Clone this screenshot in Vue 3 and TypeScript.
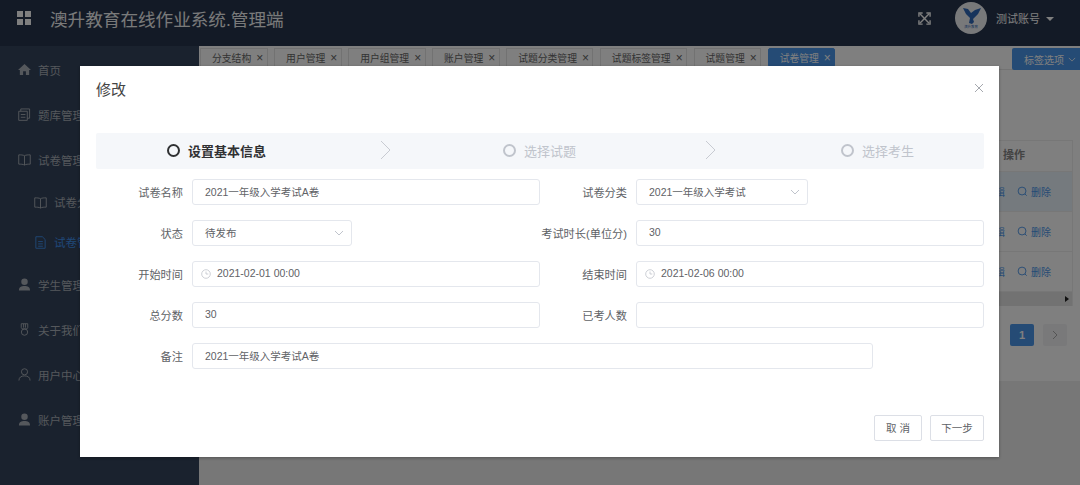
<script setup lang="ts">
interface Field {
  label: string
  value: string
  kind?: 'select' | 'date'
  width?: number
  wide?: boolean
}

const menu = [
  { name: '首页', icon: 'home' },
  { name: '题库管理', icon: 'copy' },
  { name: '试卷管理', icon: 'book' },
  { name: '试卷分类', icon: 'book', sub: true },
  { name: '试卷管理', icon: 'doc', sub: true, active: true },
  { name: '学生管理', icon: 'user' },
  { name: '关于我们', icon: 'medal' },
  { name: '用户中心', icon: 'person' },
  { name: '账户管理', icon: 'user' },
]

const tags = ['分支结构', '用户管理', '用户组管理', '账户管理', '试题分类管理', '试题标签管理', '试题管理', '试卷管理']

const fields: Field[] = [
  { label: '试卷名称', value: '2021一年级入学考试A卷' },
  { label: '试卷分类', value: '2021一年级入学考试', kind: 'select', width: 172 },
  { label: '状态', value: '待发布', kind: 'select', width: 160 },
  { label: '考试时长(单位分)', value: '30' },
  { label: '开始时间', value: '2021-02-01 00:00', kind: 'date' },
  { label: '结束时间', value: '2021-02-06 00:00', kind: 'date' },
  { label: '总分数', value: '30' },
  { label: '已考人数', value: '' },
  { label: '备注', value: '2021一年级入学考试A卷', wide: true, width: 681 },
]
</script>

<template>
  <div class="page">
    <header class="topbar">
      <svg class="grid-icon" viewBox="0 0 14 14"><path d="M0 0h6v6H0zM8 0h6v6H8zM0 8h6v6H0zM8 8h6v6H8z" /></svg>
      <h1 class="app-title">澳升教育在线作业系统.管理端</h1>
      <svg class="expand" viewBox="0 0 14 14">
        <path d="M2 2l10 10M12 2L2 12" />
        <path d="M1 5V1h4M9 1h4v4M13 9v4H9M5 13H1V9" />
      </svg>
      <svg class="avatar" viewBox="0 0 32 32">
        <circle cx="16" cy="16" r="16" fill="#f0f2f4" />
        <path d="M8 6l5 1 3 4 4-3 6-2-3 6-5 5 1 3-2 2-3-1 1-5-4-4z" fill="#2e68b8" />
        <text x="16" y="26" font-size="3.4" text-anchor="middle" fill="#2e68b8">澳升教育</text>
      </svg>
      <span class="account">测试账号</span>
      <i class="caret"></i>
    </header>
    <div class="body">
      <aside class="sidebar">
        <div
          v-for="item in menu"
          :key="item.name + item.icon"
          class="menu-item"
          :class="{ sub: item.sub, active: item.active }"
        >
          <svg class="menu-icon" viewBox="0 0 14 14">
            <path v-if="item.icon === 'home'" class="solid" d="M7 1L0 7.500h2V13h3.500V9h3v4H12V7.500h2z" />
            <path v-else-if="item.icon === 'copy'" d="M3 3.500V1h9.500v10H10M.8 3.500H10V13.300H.8zM3 7h5M3 10h5" />
            <path v-else-if="item.icon === 'book'" d="M7 3C5.500 2 3 2 .8 2v10c2.200 0 4.700 0 6.200 1 1.500-1 4-1 6.200-1V2C11 2 8.500 2 7 3zM7 3v10" />
            <path v-else-if="item.icon === 'doc'" d="M2 .8h7l3 3v9.400H2zM4.500 6h5M4.500 8.500h5M4.500 11h5" />
            <path v-else-if="item.icon === 'user'" class="solid" d="M7 .5a3.500 3.500 0 1 1 0 7 3.500 3.500 0 0 1 0-7zM1 13.500c0-4 2.500-5 6-5s6 1 6 5z" />
            <path v-else-if="item.icon === 'medal'" d="M3.500.8h7v4l-1 1.600h-5l-1-1.600zM6 1v4M8 1v4M7 6.400a3.400 3.400 0 1 1 0 6.800 3.400 3.400 0 0 1 0-6.800z" />
            <path v-else d="M7 .8a3.300 3.300 0 1 1 0 6.600A3.300 3.300 0 0 1 7 .800zM1 13.500c0-3.500 2.500-5 6-5s6 1.500 6 5" />
          </svg>
          <span>{{ item.name }}</span>
        </div>
      </aside>
      <main class="main">
        <div class="tagbar">
          <div v-for="(tag, i) in tags" :key="tag" class="tag" :class="{ current: i === tags.length - 1 }">
            {{ tag }}<span class="tag-x">×</span>
          </div>
          <button class="tag-menu">
            标签选项
            <svg viewBox="0 0 10 6"><path d="M1 1l4 4 4-4" /></svg>
          </button>
        </div>
        <section class="content">
          <div class="table">
            <div class="table-head"><span>操作</span></div>
            <div v-for="n in 3" :key="n" class="table-row" :class="{ hovered: n === 1 }">
              <span>编辑</span>
              <svg viewBox="0 0 12 12"><circle cx="5.500" cy="5.500" r="4.300" /><path d="M8.600 8.600l2 2" /></svg>
              <span>删除</span>
            </div>
            <div class="table-scroll"><i></i></div>
          </div>
          <div class="pager">
            <span class="page-no">1</span>
            <span class="page-next"><svg viewBox="0 0 6 10"><path d="M1 1l4 4-4 4" /></svg></span>
          </div>
        </section>
      </main>
    </div>

    <div class="overlay">
      <div class="dialog">
        <div class="dialog-head">
          <span class="dialog-title">修改</span>
          <svg class="close" viewBox="0 0 10 10"><path d="M1 1l8 8M9 1l-8 8" /></svg>
        </div>
        <div class="steps">
          <div class="step first"><i></i>设置基本信息</div>
          <svg class="step-arrow a1" viewBox="0 0 12 20"><path d="M1 1l9 9-9 9" /></svg>
          <div class="step"><i></i>选择试题</div>
          <svg class="step-arrow a2" viewBox="0 0 12 20"><path d="M1 1l9 9-9 9" /></svg>
          <div class="step"><i></i>选择考生</div>
        </div>
        <form class="form">
          <div v-for="f in fields" :key="f.label" class="field" :class="{ wide: f.wide }">
            <label>{{ f.label }}</label>
            <div class="input" :style="f.width ? { width: f.width + 'px', flex: 'none' } : undefined">
              <svg v-if="f.kind === 'date'" class="clock" viewBox="0 0 10 10">
                <circle cx="5" cy="5" r="4.300" /><path d="M5 2.500V5h2.300" />
              </svg>
              <span>{{ f.value }}</span>
              <svg v-if="f.kind === 'select'" class="chevron" viewBox="0 0 10 6"><path d="M1 1l4 4 4-4" /></svg>
            </div>
          </div>
        </form>
        <div class="dialog-foot">
          <button type="button" class="btn cancel">取 消</button>
          <button type="button" class="btn next">下一步</button>
        </div>
      </div>
    </div>
  </div>
</template>

<style>
html, body { margin: 0; overflow: hidden; }
</style>

<style scoped>
.page {
  position: relative;
  width: 1080px;
  height: 485px;
  overflow: hidden;
  display: flex;
  flex-direction: column;
  font-family: "Liberation Sans", "Noto Sans CJK SC", sans-serif;
  background: #eee;
}
.topbar {
  height: 46px;
  flex: none;
  padding-bottom: 10px;
  box-sizing: border-box;
  display: flex;
  align-items: center;
  background: #26344c;
  color: #fff;
}
.grid-icon { width: 14px; height: 14px; margin: 0 0 0 17px; fill: #fff; }
.app-title {
  margin: 0 0 0 19px;
  font-size: 17.600px;
  font-weight: 400;
  color: #fff;
  opacity: 0.95;
}
.expand {
  width: 13px;
  height: 13px;
  margin-left: auto;
  fill: none;
  stroke: #fff;
  stroke-width: 1.500;
}
.avatar { width: 32px; height: 32px; margin-left: 24px; }
.account { margin-left: 9px; font-size: 11px; color: #fff; }
.caret {
  margin: 2px 26px 0 6px;
  border: 4px solid transparent;
  border-top-color: #fff;
  border-bottom-width: 0;
}
.body { flex: 1; display: flex; min-height: 0; }
.sidebar {
  width: 199px;
  flex: none;
  background: #34445c;
  padding-top: 1px;
  color: #aab0b8;
  font-size: 11.500px;
}
.menu-item {
  height: 45px;
  padding-left: 18px;
  display: flex;
  align-items: center;
  gap: 7px;
}
.menu-item.sub { height: 40px; padding-left: 34px; }
.menu-item.active { color: #3f90ee; }
.menu-icon {
  width: 13px;
  height: 13px;
  flex: none;
  fill: none;
  stroke: currentColor;
  stroke-width: 1;
}
.menu-icon .solid { fill: currentColor; stroke: none; }
.main { flex: 1; min-width: 0; display: flex; flex-direction: column; }
.tagbar {
  height: 24px;
  flex: none;
  padding: 2px 0 0 1px;
  box-sizing: border-box;
  display: flex;
  gap: 6.400px;
  background: #fff;
  border-bottom: 1px solid #e6e6e6;
}
.tag {
  height: 19px;
  padding: 0 3.500px 0 11px;
  display: flex;
  align-items: center;
  gap: 5px;
  font-size: 9.800px;
  color: #666;
  border: 1px solid #e4e4e4;
  box-sizing: border-box;
}
.tag.current { background: #4a96ea; border-color: #4a96ea; color: #fff; border-radius: 2px; }
.tag-x { font-size: 12px; line-height: 1; }
.tag-menu {
  height: 22px;
  width: 68px;
  margin-left: auto;
  padding: 0 0 0 12px;
  display: flex;
  align-items: center;
  gap: 4px;
  border: none;
  border-radius: 2px 0 0 2px;
  background: #4a96ea;
  color: #fff;
  font: 10px "Liberation Sans", "Noto Sans CJK SC", sans-serif;
}
.tag-menu svg { width: 8px; height: 5px; fill: none; stroke: #fff; }
.content {
  height: 311px;
  flex: none;
  padding: 70px 7px 0 10px;
  box-sizing: border-box;
  background: #fff;
  font-size: 10px;
}
.table { border: 1px solid #eee; border-bottom: none; }
.table-head {
  height: 31px;
  display: flex;
  justify-content: flex-end;
  align-items: center;
  padding: 0 47px 4px 0;
  box-sizing: border-box;
  font-size: 11px;
  color: #888;
  font-weight: 700;
  border-bottom: 1px solid #eee;
}
.table-row {
  height: 40px;
  display: flex;
  justify-content: flex-end;
  align-items: center;
  gap: 3px;
  padding-right: 21px;
  color: #4a96ea;
  border-bottom: 1px solid #eee;
  box-sizing: border-box;
}
.table-row.hovered { background: #eaf4fd; }
.table-row svg {
  width: 11px;
  height: 11px;
  margin-left: 9px;
  fill: none;
  stroke: currentColor;
}
.table-scroll {
  height: 14px;
  display: flex;
  justify-content: flex-end;
  align-items: center;
  padding-right: 3px;
  background: #e4e4e4;
}
.table-scroll i {
  border: 3.500px solid transparent;
  border-left: 4px solid #222;
  border-right-width: 0;
}
.pager {
  margin-top: 18px;
  display: flex;
  justify-content: flex-end;
  gap: 9px;
  padding-right: 6px;
}
.page-no, .page-next {
  width: 24px;
  height: 22px;
  display: flex;
  align-items: center;
  justify-content: center;
  border-radius: 2px;
  font-size: 11px;
  font-weight: 700;
}
.page-no { background: #4a96ea; color: #fff; }
.page-next { background: #f2f3f5; }
.page-next svg { width: 6px; height: 10px; fill: none; stroke: #aaa; }
.overlay {
  position: absolute;
  inset: 0;
  background: rgba(0, 0, 0, 0.5);
  padding: 66px 0 0 80px;
  box-sizing: border-box;
}
.dialog {
  width: 919px;
  height: 391px;
  display: flex;
  flex-direction: column;
  padding: 0 15px 16px 16px;
  box-sizing: border-box;
  background: #fff;
  box-shadow: 0 1px 3px rgba(0, 0, 0, 0.3);
  color: #606266;
}
.dialog-head {
  height: 67px;
  flex: none;
  display: flex;
  justify-content: space-between;
  padding-top: 14px;
  box-sizing: border-box;
}
.dialog-title { font-size: 15px; line-height: 20px; color: #444; }
.close { width: 10px; height: 10px; margin-top: 3px; fill: none; stroke: #a5a8ae; }
.steps {
  height: 36px;
  flex: none;
  padding: 0 0 2px 71px;
  box-sizing: border-box;
  display: flex;
  align-items: center;
  background: #f5f7fa;
  border-radius: 2px;
  font-size: 13px;
  color: #c0c4cc;
}
.step { display: flex; align-items: center; gap: 8px; }
.step i {
  width: 9px;
  height: 9px;
  border: 2px solid currentColor;
  border-radius: 50%;
}
.step.first { color: #303133; font-weight: 700; }
.step-arrow { width: 12px; height: 20px; fill: none; stroke: #c8cbd2; }
.a1 { margin: 0 111px 0 114px; }
.a2 { margin: 0 124px 0 129px; }
.form {
  margin-top: 10px;
  display: grid;
  grid-template-columns: 444px 444px;
  row-gap: 15px;
}
.field { display: flex; align-items: center; height: 26px; }
.field.wide { grid-column: 1 / 3; }
.field label {
  width: 87px;
  margin-right: 9px;
  padding-bottom: 1px;
  flex: none;
  text-align: right;
  white-space: nowrap;
  font-size: 11.200px;
  color: #606266;
}
.input {
  flex: 1;
  height: 26px;
  box-sizing: border-box;
  display: flex;
  align-items: center;
  padding: 0 12px 2px;
  background: #fff;
  border: 1px solid #e4e7ed;
  border-radius: 3px;
  font-size: 10.500px;
  color: #606266;
}
.clock { width: 10px; height: 10px; margin: 2px 6px 0 -4px; fill: none; stroke: #c0c4cc; stroke-width: 0.800; }
.chevron { width: 10px; height: 6px; margin: 2px -5px 0 auto; fill: none; stroke: #c0c4cc; }
.dialog-foot {
  margin-top: auto;
  display: flex;
  justify-content: flex-end;
  gap: 8px;
}
.btn {
  height: 26px;
  padding: 0 0 1px;
  background: #fff;
  border: 1px solid #dcdfe6;
  border-radius: 2px;
  color: #606266;
  font: 10.500px "Liberation Sans", "Noto Sans CJK SC", sans-serif;
}
.cancel { width: 48px; }
.next { width: 54px; }
</style>
